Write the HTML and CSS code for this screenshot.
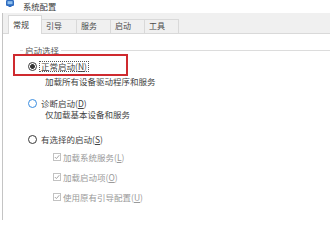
FILE: index.html
```html
<!DOCTYPE html>
<html lang="zh-CN">
<head>
<meta charset="utf-8">
<title>系统配置</title>
<link rel="stylesheet" href="styles.css">
</head>
<body>
<div class="titlebar">
  <svg class="appicon" width="8" height="7" viewBox="0 0 8 7">
    <rect x="0" y="0" width="8" height="6" rx="1.2" fill="#2f6cc0"/>
    <rect x="1.5" y="1.2" width="5" height="3" fill="#8fc0ee"/>
    <rect x="2.5" y="6" width="3" height="1" fill="#2f6cc0"/>
  </svg>
  <span class="title">系统配置</span>
</div>
<div class="frame">
  <div class="tabs">
    <div class="tab active w34">常规</div>
    <div class="tab w36">引导</div>
    <div class="tab w35">服务</div>
    <div class="tab w35">启动</div>
    <div class="tab w35">工具</div>
  </div>
  <div class="panel">
    <div class="group-head">
      <span class="gl short"></span>
      <span class="legend">启动选择</span>
      <span class="gl long"></span>
    </div>
    <div class="opt r1"><span class="radio checked"></span><span class="focus">正常启动(<u>N</u>)</span></div>
    <div class="desc d1">加载所有设备驱动程序和服务</div>
    <div class="opt r2"><span class="radio hover"></span><span class="lbl">诊断启动(<u>D</u>)</span></div>
    <div class="desc d2">仅加载基本设备和服务</div>
    <div class="opt r3"><span class="radio"></span><span class="lbl">有选择的启动(<u>S</u>)</span></div>
    <div class="chk c1"><span class="box"><svg width="6" height="6" viewBox="0 0 6 6"><polyline points="0.8,3 2.4,4.6 5.3,1.2" fill="none" stroke="#a6a6a6" stroke-width="1"/></svg></span><span class="dis">加载系统服务(<u>L</u>)</span></div>
    <div class="chk c2"><span class="box"><svg width="6" height="6" viewBox="0 0 6 6"><polyline points="0.8,3 2.4,4.6 5.3,1.2" fill="none" stroke="#a6a6a6" stroke-width="1"/></svg></span><span class="dis">加载启动项(<u>O</u>)</span></div>
    <div class="chk c3"><span class="box"><svg width="6" height="6" viewBox="0 0 6 6"><polyline points="0.8,3 2.4,4.6 5.3,1.2" fill="none" stroke="#a6a6a6" stroke-width="1"/></svg></span><span class="dis">使用原有引导配置(<u>U</u>)</span></div>
  </div>
</div>
<div class="annot"></div>
</body>
</html>
```

FILE: styles.css
```css
html, body {
  margin: 0;
  padding: 0;
  background: #ffffff;
}
body {
  width: 330px;
  height: 220px;
  overflow: hidden;
  position: relative;
  font-family: "Noto Sans CJK SC", "Noto Sans", sans-serif;
  font-size: 8.5px;
  color: #444444;
}
u {
  text-decoration: underline;
  text-underline-offset: 1px;
}
.titlebar {
  height: 11px;
  display: flex;
  align-items: center;
  padding-left: 6px;
}
.appicon {
  align-self: flex-start;
  display: block;
}
.title {
  margin-left: 9px;
  font-size: 8.3px;
  line-height: 10px;
  color: #3a3a3a;
}
.frame {
  margin-top: 2px;
  margin-left: 2px;
  border-left: 1px solid #c4c4c4;
  height: 207px;
}
.tabs {
  height: 20px;
  background: #f0f0f0;
  display: flex;
  align-items: flex-end;
  padding-left: 5px;
}
.tab {
  box-sizing: border-box;
  height: 14px;
  border: 1px solid #d9d9d9;
  border-bottom: 0;
  margin-right: -1px;
  padding: 1px 0 0 4px;
  font-size: 8px;
  line-height: 10px;
  color: #4a4a4a;
  background: #f0f0f0;
}
.tab.active {
  height: 19px;
  padding-top: 4px;
  background: #ffffff;
  margin-bottom: -1px;
  position: relative;
  z-index: 1;
  color: #3a3a3a;
}
.w34 { width: 34px; }
.w35 { width: 35px; }
.w36 { width: 36px; }
.panel {
  border-top: 1px solid #d9d9d9;
  padding: 11px 0 0 17px;
}
.group-head {
  height: 10px;
  display: flex;
  align-items: center;
}
.gl {
  height: 1px;
  background: #dcdcdc;
}
.gl.short { width: 3px; }
.gl.long { flex: 1; }
.legend {
  margin: 0 2px;
  line-height: 10px;
  color: #555;
}
.opt, .desc, .chk {
  height: 10px;
  line-height: 10px;
  display: flex;
  align-items: center;
}
.opt { padding-left: 8px; }
.desc { padding-left: 25px; }
.chk { padding-left: 33px; }
.r1 { margin-top: 6px; }
.d1 { margin-top: 5px; }
.r2 { margin-top: 12px; }
.d2 { margin-top: 1px; }
.r3 { margin-top: 15px; }
.c1 { margin-top: 8px; }
.c2 { margin-top: 10px; }
.c3 { margin-top: 10px; }
.radio {
  box-sizing: border-box;
  width: 9px;
  height: 9px;
  border: 1px solid #3a3a3a;
  border-radius: 50%;
  background: #fff;
  margin-right: 3px;
  flex: none;
}
.radio.checked {
  background: radial-gradient(circle, #333 0 2.1px, #fff 2.6px);
}
.radio.hover {
  border-color: #3a8de0;
}
.focus {
  outline: 1px dotted #555;
  padding: 0 1px;
  line-height: 9px;
}
.lbl { margin-left: 1px; }
.box {
  box-sizing: border-box;
  width: 8px;
  height: 8px;
  border: 1px solid #c2c2c2;
  margin-right: 2px;
  display: flex;
  align-items: center;
  justify-content: center;
  flex: none;
}
.box svg { display: block; }
.dis { color: #9a9a9a; }
.annot {
  position: absolute;
  left: 13px;
  top: 54px;
  width: 115px;
  height: 22px;
  box-sizing: border-box;
  border: 2px solid #cf2a2f;
}
```
